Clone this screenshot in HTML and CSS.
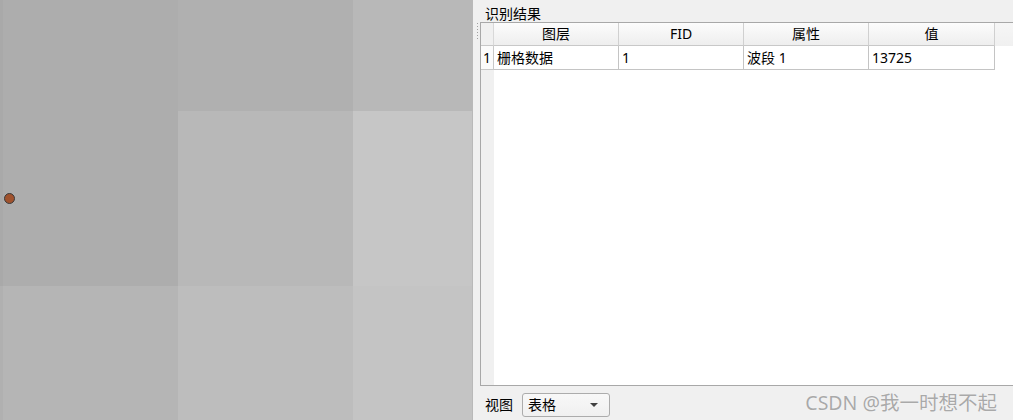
FILE: index.html
```html
<!DOCTYPE html>
<html lang="zh-CN">
<head>
<meta charset="utf-8">
<title>识别结果</title>
<link rel="stylesheet" href="styles.css">
</head>
<body>
<div class="app">
  <div class="canvas">
    <div class="cell c-s1"></div><div class="cell c-a1"></div><div class="cell c-b1"></div><div class="cell c-c1"></div>
    <div class="cell c-s2"></div><div class="cell c-a2"></div><div class="cell c-b2"></div><div class="cell c-c2"></div>
    <div class="cell c-s3"></div><div class="cell c-a3"></div><div class="cell c-b3"></div><div class="cell c-c3"></div>
    <span class="pin"></span>
  </div>
  <div class="splitter"></div>
  <div class="panel">
    <div class="grip"></div>
    <div class="content">
      <div class="title">识别结果</div>
      <div class="frame">
        <div class="hcell corner"></div>
        <div class="hcell">图层</div>
        <div class="hcell">FID</div>
        <div class="hcell">属性</div>
        <div class="hcell">值</div>
        <div class="hfill"></div>
        <div class="vcell">1</div>
        <div class="dcell">栅格数据</div>
        <div class="dcell">1</div>
        <div class="dcell">波段 1</div>
        <div class="dcell">13725</div>
        <div class="dfill"></div>
        <div class="vrest"></div>
        <div class="drest"></div>
      </div>
      <div class="bottom">
        <span class="label">视图</span>
        <div class="combo"><span>表格</span><span class="arrow"></span></div>
      </div>
    </div>
    <div class="watermark">CSDN @我一时想不起</div>
  </div>
</div>
</body>
</html>
```
FILE: styles.css
```css
html, body {
  margin: 0;
  padding: 0;
}
body {
  width: 1013px;
  height: 420px;
  overflow: hidden;
  font-family: "Noto Sans", "Noto Sans CJK SC", sans-serif;
  font-size: 14px;
  color: #000;
  background: #f0f0f0;
}
.app {
  display: flex;
  height: 420px;
}
.canvas {
  position: relative;
  width: 472px;
  flex: none;
  display: grid;
  grid-template-columns: 3px 175px 175px 119px;
  grid-template-rows: 111px 175px 134px;
}
.c-s1, .c-s2 { background: #a9a9a9; }
.c-s3 { background: #b0b0b0; }
.c-a1, .c-a2 { background: #adadad; }
.c-b1 { background: #b0b0b0; }
.c-c1 { background: #b8b8b8; }
.c-b2 { background: #b8b8b8; }
.c-c2 { background: #c6c6c6; }
.c-a3 { background: #b5b5b5; }
.c-b3 { background: #bdbdbd; }
.c-c3 { background: #c4c4c4; }
.pin {
  position: absolute;
  left: 4px;
  top: 193px;
  width: 9px;
  height: 9px;
  border-radius: 50%;
  background: #a0522d;
  border: 1px solid #3a3a3a;
}
.splitter {
  width: 1px;
  flex: none;
  background: #b9b9b9;
}
.panel {
  position: relative;
  flex: 1;
  display: flex;
  padding-left: 4px;
  min-width: 0;
}
.grip {
  flex: none;
  width: 1px;
  height: 17px;
  margin-top: 23px;
  background: repeating-linear-gradient(to bottom, #a0a0a0 0 1px, transparent 1px 3px);
}
.content {
  flex: 1;
  margin-left: 2px;
  display: flex;
  flex-direction: column;
  min-width: 0;
  overflow: hidden;
}
.title {
  height: 22px;
  box-sizing: border-box;
  padding: 7px 0 0 5px;
  line-height: 14px;
  font-size: 14px;
}
.frame {
  width: 540px;
  height: 364px;
  box-sizing: border-box;
  border: 1px solid #a8a8a8;
  background: #fff;
  display: grid;
  grid-template-columns: 13px 125px 125px 125px 126px 1fr;
  grid-template-rows: 23px 24px 1fr;
}
.hcell {
  box-sizing: border-box;
  border-right: 1px solid #d0d0d0;
  border-bottom: 1px solid #c8c8c8;
  background: linear-gradient(to bottom, #fcfcfc, #eeeeee);
  text-align: center;
  line-height: 22px;
}
.hcell.corner {
  background: #f0f0f0;
  border-right: 1px solid #d8d8d8;
}
.hfill {
  background: linear-gradient(to bottom, #f6f6f6, #f0f0f0);
}
.vcell {
  box-sizing: border-box;
  border-right: 1px solid #c8c8c8;
  border-bottom: 1px solid #c8c8c8;
  background: #fbfbfb;
  padding-left: 2px;
  line-height: 24px;
}
.dcell {
  box-sizing: border-box;
  border-right: 1px solid #c4c4c4;
  border-bottom: 1px solid #c4c4c4;
  padding-left: 3px;
  line-height: 24px;
  white-space: nowrap;
}
.dfill { background: #fff; }
.vrest { background: #f0f0f0; }
.drest { grid-column: 2 / 7; background: #fff; }
.bottom {
  display: flex;
  align-items: center;
  gap: 9px;
  padding: 7px 0 0 5px;
}
.label {
  line-height: 24px;
}
.combo {
  width: 88px;
  height: 24px;
  box-sizing: border-box;
  border: 1px solid #acacac;
  border-radius: 3px;
  background: linear-gradient(to bottom, #f8f8f8, #f0f0f0);
  display: flex;
  align-items: center;
  justify-content: space-between;
  padding: 0 11px 0 5px;
  line-height: 22px;
}
.arrow {
  width: 0;
  height: 0;
  border-left: 4px solid transparent;
  border-right: 4px solid transparent;
  border-top: 4px solid #404040;
}
.watermark {
  position: absolute;
  right: 16px;
  bottom: 5px;
  font-size: 19.5px;
  line-height: 24px;
  color: #a9a9a9;
  text-shadow: 0 0 1px #fff;
  white-space: nowrap;
}
```
